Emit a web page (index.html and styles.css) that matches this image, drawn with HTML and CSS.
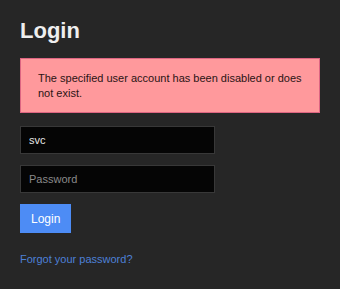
FILE: index.html
```html
<!DOCTYPE html>
<html>
<head>
<meta charset="utf-8">
<link rel="stylesheet" href="styles.css">
</head>
<body>
<div class="page">
  <h1 class="title">Login</h1>
  <div class="alert">The specified user account has been disabled or does not exist.</div>
  <form class="form">
    <input class="field" type="text" value="svc">
    <input class="field" type="password" placeholder="Password">
    <button class="btn" type="button">Login</button>
  </form>
  <a class="link" href="#">Forgot your password?</a>
</div>
</body>
</html>
```

FILE: styles.css
```css
html, body {
  margin: 0;
  padding: 0;
  background: #262626;
  font-family: "Liberation Sans", Arial, sans-serif;
}
.page {
  display: flex;
  flex-direction: column;
  align-items: flex-start;
  padding: 20px;
}
.title {
  margin: 0;
  font-size: 22px;
  line-height: 1;
  font-weight: bold;
  color: #eeeeee;
}
.alert {
  box-sizing: border-box;
  width: 300px;
  margin-top: 16px;
  padding: 12px 16px 11px 17px;
  background: #ff999c;
  border: 1px solid #dd6582;
  color: #2a1414;
  font-size: 11px;
  line-height: 15px;
}
.form {
  display: flex;
  flex-direction: column;
  align-items: flex-start;
  gap: 11px;
  margin-top: 13px;
}
.field {
  box-sizing: border-box;
  width: 195px;
  height: 28px;
  margin: 0;
  padding: 0 8px;
  background: #050505;
  border: 1px solid #383838;
  color: #e8e8e8;
  font-family: "Liberation Sans", Arial, sans-serif;
  font-size: 11px;
  outline: none;
}
.field::placeholder {
  color: #8a8a8a;
}
.btn {
  box-sizing: border-box;
  height: 29px;
  margin: 0;
  padding: 0 11px;
  background: #4d8cf5;
  border: none;
  color: #ffffff;
  font-family: "Liberation Sans", Arial, sans-serif;
  font-size: 12px;
}
.link {
  margin-top: 19px;
  color: #4d80d6;
  font-size: 11px;
  line-height: 15px;
  text-decoration: none;
}
```
